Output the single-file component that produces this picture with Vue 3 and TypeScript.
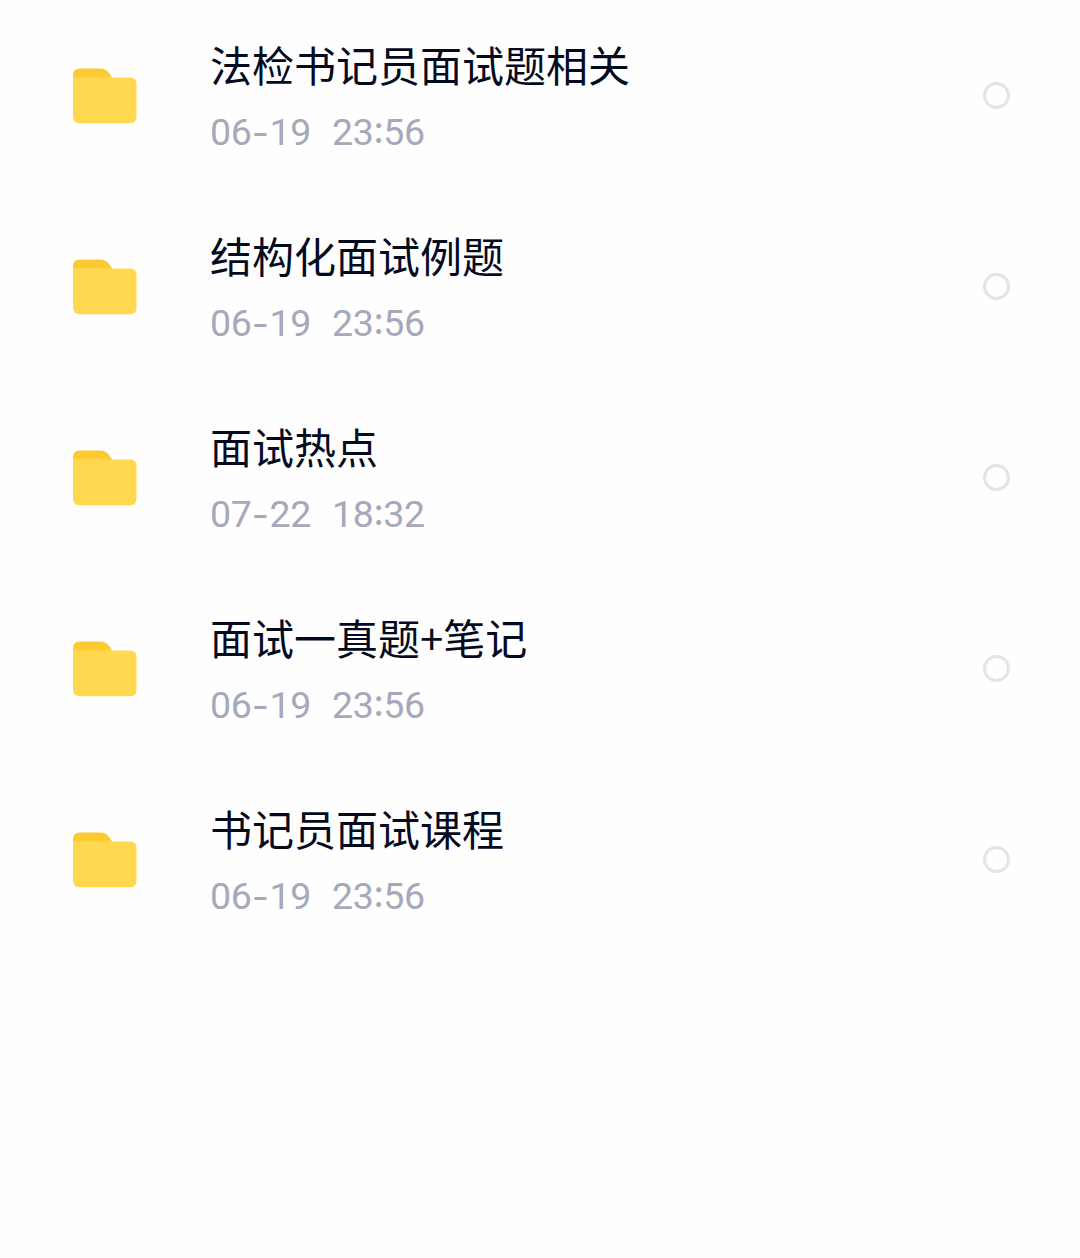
<script setup lang="ts">
interface Folder {
  name: string
  date: [string, string]
  time: [string, string]
}

const folders: Folder[] = [
  { name: '法检书记员面试题相关', date: ['06', '19'], time: ['23', '56'] },
  { name: '结构化面试例题', date: ['06', '19'], time: ['23', '56'] },
  { name: '面试热点', date: ['07', '22'], time: ['18', '32'] },
  { name: '面试一真题+笔记', date: ['06', '19'], time: ['23', '56'] },
  { name: '书记员面试课程', date: ['06', '19'], time: ['23', '56'] },
]
</script>

<template>
  <main class="list">
    <div v-for="folder in folders" :key="folder.name" class="row">
      <svg class="icon" viewBox="0 0 64 56" aria-hidden="true">
        <defs>
          <linearGradient id="tab" x1="0" y1="0" x2="0" y2="1">
            <stop offset="0.5" stop-color="#fbc930" />
            <stop offset="1" stop-color="#fdd141" />
          </linearGradient>
        </defs>
        <path d="M0 12V7Q0 0.500 7 0.500H27Q33 0.500 36 5L39.500 10V12Z" fill="url(#tab)" />
        <path d="M0 9.500H57Q63.500 9.500 63.500 16V48.500Q63.500 55.300 57 55.300H7Q0 55.300 0 48.500Z" fill="#ffd850" />
      </svg>
      <div class="info">
        <div class="name">{{ folder.name }}</div>
        <div class="meta">
          <span>{{ folder.date[0] }}<span class="dash">-</span>{{ folder.date[1] }}</span>
          <span>{{ folder.time[0] }}<span class="colon">:</span>{{ folder.time[1] }}</span>
        </div>
      </div>
      <span class="radio"></span>
    </div>
  </main>
</template>

<style>
body {
  background: #fefefe;
}
</style>

<style scoped>
.list {
  min-height: 1258px;
  background: #fefefe;
}
.row {
  display: flex;
  align-items: center;
  box-sizing: border-box;
  height: 191px;
  padding: 0 70px 0 73px;
}
.icon {
  width: 64px;
  height: 56px;
}
.info {
  flex: 1;
  margin-left: 73px;
  padding-top: 2px;
}
.name {
  font-family: "Noto Sans CJK SC", sans-serif;
  font-size: 42px;
  line-height: 60px;
  color: #050b1f;
}
.meta {
  display: flex;
  gap: 21px;
  margin-top: 11px;
  font-family: Roboto, sans-serif;
  font-size: 37.5px;
  line-height: 54px;
  letter-spacing: -0.35px;
  color: #a5a9b9;
}
.dash,
.colon {
  display: inline-block;
  position: relative;
  font-family: Inter, sans-serif;
  letter-spacing: 0;
  line-height: 1;
  text-align: center;
}
.dash {
  top: 1px;
  width: 18px;
}
.colon {
  top: -2px;
  width: 10px;
}
.radio {
  box-sizing: border-box;
  width: 27px;
  height: 27px;
  border: 3px solid #e4e4e4;
  border-radius: 50%;
}
</style>
